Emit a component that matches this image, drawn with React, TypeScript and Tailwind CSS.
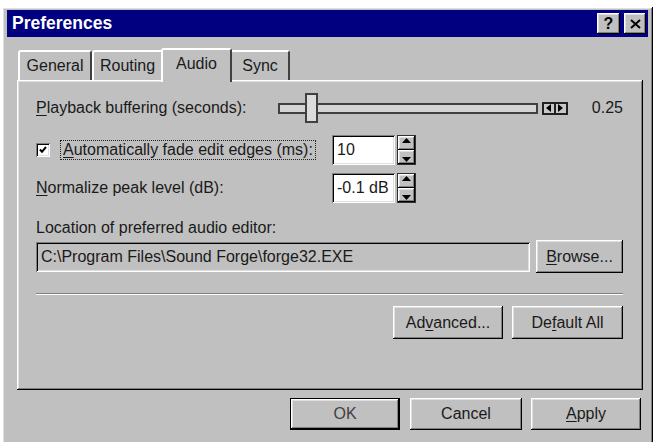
import React from "react";

const raised =
  "bg-[#c0c0c0] shadow-[inset_-1px_-1px_0_#000,inset_1px_1px_0_#fff,inset_-2px_-2px_0_#808080,inset_2px_2px_0_#dfdfdf]";
const sunken =
  "shadow-[inset_1px_1px_0_#808080,inset_-1px_-1px_0_#fff,inset_2px_2px_0_#000,inset_-2px_-2px_0_#dfdfdf]";

function Button({
  children,
  className = "",
  isDefault = false,
}: {
  children: React.ReactNode;
  className?: string;
  isDefault?: boolean;
}) {
  return (
    <div
      className={`${className} ${isDefault ? "border border-black" : ""} flex items-center justify-center`}
    >
      <div className={`${raised} w-full h-full flex items-center justify-center text-[16px] text-[#1a1a1a]`}>
        {children}
      </div>
    </div>
  );
}

function Spinner() {
  return (
    <div className="ml-[2px] w-[19px] h-[30px] border border-[#303030] flex flex-col bg-[#c0c0c0]">
      <div className={`${raised} flex-1 flex items-start justify-center pt-[2px]`}>
        <svg width="9" height="5" viewBox="0 0 9 5">
          <polygon points="4.5,0 9,5 0,5" fill="#000" />
        </svg>
      </div>
      <div className={`${raised} flex-1 flex items-end justify-center pb-[2px]`}>
        <svg width="9" height="5" viewBox="0 0 9 5">
          <polygon points="0,0 9,0 4.5,5" fill="#000" />
        </svg>
      </div>
    </div>
  );
}

function Tab({ label, width, selected = false }: { label: string; width: string; selected?: boolean }) {
  return (
    <div
      className={`${width} ${
        selected ? "h-[34px] -mx-[2px] -mb-[2px] z-10 pb-[4px]" : "h-[30px]"
      } relative bg-[#c0c0c0] rounded-t-[3px] border-t-2 border-l-2 border-t-white border-l-white border-r-2 border-r-[#404040] flex items-center justify-center text-[16px] text-[#1a1a1a]`}
    >
      {label}
    </div>
  );
}

export default function App() {
  return (
    <div className="w-[653px] h-[442px] bg-white overflow-hidden font-['Liberation_Sans',Arial,sans-serif]">
      <div className={`${raised} ml-[2px] mt-[7px] w-[651px] h-[440px] pt-[3px] px-[5px]`}>
        {/* Title bar */}
        <div className="h-[27px] bg-[#000080] flex items-center justify-between pl-[5px] pr-[2px]">
          <span className="text-white font-bold text-[17.5px] leading-none">Preferences</span>
          <div className="flex gap-[4px]">
            <div className={`${raised} w-[23px] h-[21px] flex items-center justify-center text-[16px] font-bold text-black`}>
              ?
            </div>
            <div className={`${raised} w-[22px] h-[21px] flex items-center justify-center`}>
              <svg width="11" height="10" viewBox="0 0 11 10">
                <path d="M1 1 L10 9 M10 1 L1 9" stroke="#000" strokeWidth="2" />
              </svg>
            </div>
          </div>
        </div>

        <div className="ml-[10px] mr-[5px]">
          {/* Tabs */}
          <div className="mt-[11px] h-[32px] flex items-end pl-[1px]">
            <Tab label="General" width="w-[74px]" />
            <Tab label="Routing" width="w-[71px]" />
            <Tab label="Audio" width="w-[71px]" selected />
            <Tab label="Sync" width="w-[60px]" />
          </div>

          {/* Panel */}
          <div className={`${raised} h-[310px] pl-[19px] pr-[20px] pt-[13px] text-[16px] text-[#1a1a1a]`}>
            {/* Playback buffering */}
            <div className="h-[30px] flex items-center">
              <div className="w-[243px]">
                <span className="underline underline-offset-2">P</span>layback buffering (seconds):
              </div>
              <div className="relative w-[260px] h-[30px] flex items-center">
                <div className="w-full h-[11px] border-2 border-[#404040] bg-[#d4d4d4]" />
                <div className="absolute left-[27px] top-0 w-[13px] h-[30px] border-2 border-[#404040] bg-[#dcdcdc]" />
              </div>
              <div className="ml-[4px] w-[26px] h-[13px] bg-[#202020] flex gap-[2px] p-[2px]">
                <div className="flex-1 bg-[#c8c8c8] flex items-center justify-center">
                  <svg width="5" height="8" viewBox="0 0 5 8">
                    <polygon points="5,0 5,8 0,4" fill="#000" />
                  </svg>
                </div>
                <div className="flex-1 bg-[#c8c8c8] flex items-center justify-center">
                  <svg width="5" height="8" viewBox="0 0 5 8">
                    <polygon points="0,0 5,4 0,8" fill="#000" />
                  </svg>
                </div>
              </div>
              <span className="ml-[24px]">0.25</span>
            </div>

            {/* Auto fade */}
            <div className="mt-[12px] h-[30px] flex items-center">
              <div className="w-[296px] flex items-center">
                <div className={`${sunken} w-[14px] h-[14px] bg-white flex items-center justify-center`}>
                  <svg width="8" height="8" viewBox="0 0 8 8">
                    <path d="M1 3.5 L3 5.8 L7 1" stroke="#000" strokeWidth="2" fill="none" />
                  </svg>
                </div>
                <span className="ml-[10px] px-[2px] border border-dotted border-[#202020] leading-[18px]">
                  <span className="underline underline-offset-2">A</span>utomatically fade edit edges (ms):
                </span>
              </div>
              <div className={`${sunken} w-[63px] h-[30px] bg-white flex items-center pl-[5px]`}>10</div>
              <Spinner />
            </div>

            {/* Normalize */}
            <div className="mt-[8px] h-[30px] flex items-center">
              <div className="w-[296px]">
                <span className="underline underline-offset-2">N</span>ormalize peak level (dB):
              </div>
              <div className={`${sunken} w-[63px] h-[30px] bg-white flex items-center pl-[5px]`}>-0.1 dB</div>
              <Spinner />
            </div>

            {/* Location */}
            <div className="mt-[16px] leading-[18px]">Location of preferred audio editor:</div>
            <div className="mt-[3px] h-[33px] flex items-center">
              <div className={`${sunken} w-[494px] h-[30px] bg-[#c0c0c0] flex items-center pl-[5px]`}>
                C:\Program Files\Sound Forge\forge32.EXE
              </div>
              <Button className="ml-[6px] w-[87px] h-[33px]">
                <span>
                  <span className="underline underline-offset-2">B</span>rowse...
                </span>
              </Button>
            </div>

            {/* Separator */}
            <div className="mt-[20px] h-[2px] border-t border-t-[#808080] border-b border-b-white" />

            <div className="mt-[11px] flex justify-end gap-[9px]">
              <Button className="w-[110px] h-[33px]">
                <span>
                  Ad<span className="underline underline-offset-2">v</span>anced...
                </span>
              </Button>
              <Button className="w-[111px] h-[33px]">
                <span>
                  De<span className="underline underline-offset-2">f</span>ault All
                </span>
              </Button>
            </div>
          </div>

          {/* Bottom buttons */}
          <div className="mt-[8px] mr-[2px] flex justify-end">
            <Button className="w-[110px] h-[32px]" isDefault>
              <span className="text-[#404040]">OK</span>
            </Button>
            <Button className="ml-[10px] w-[112px] h-[32px]">Cancel</Button>
            <Button className="ml-[9px] w-[110px] h-[32px]">
              <span>
                <span className="underline underline-offset-2">A</span>pply
              </span>
            </Button>
          </div>
        </div>
      </div>
    </div>
  );
}
